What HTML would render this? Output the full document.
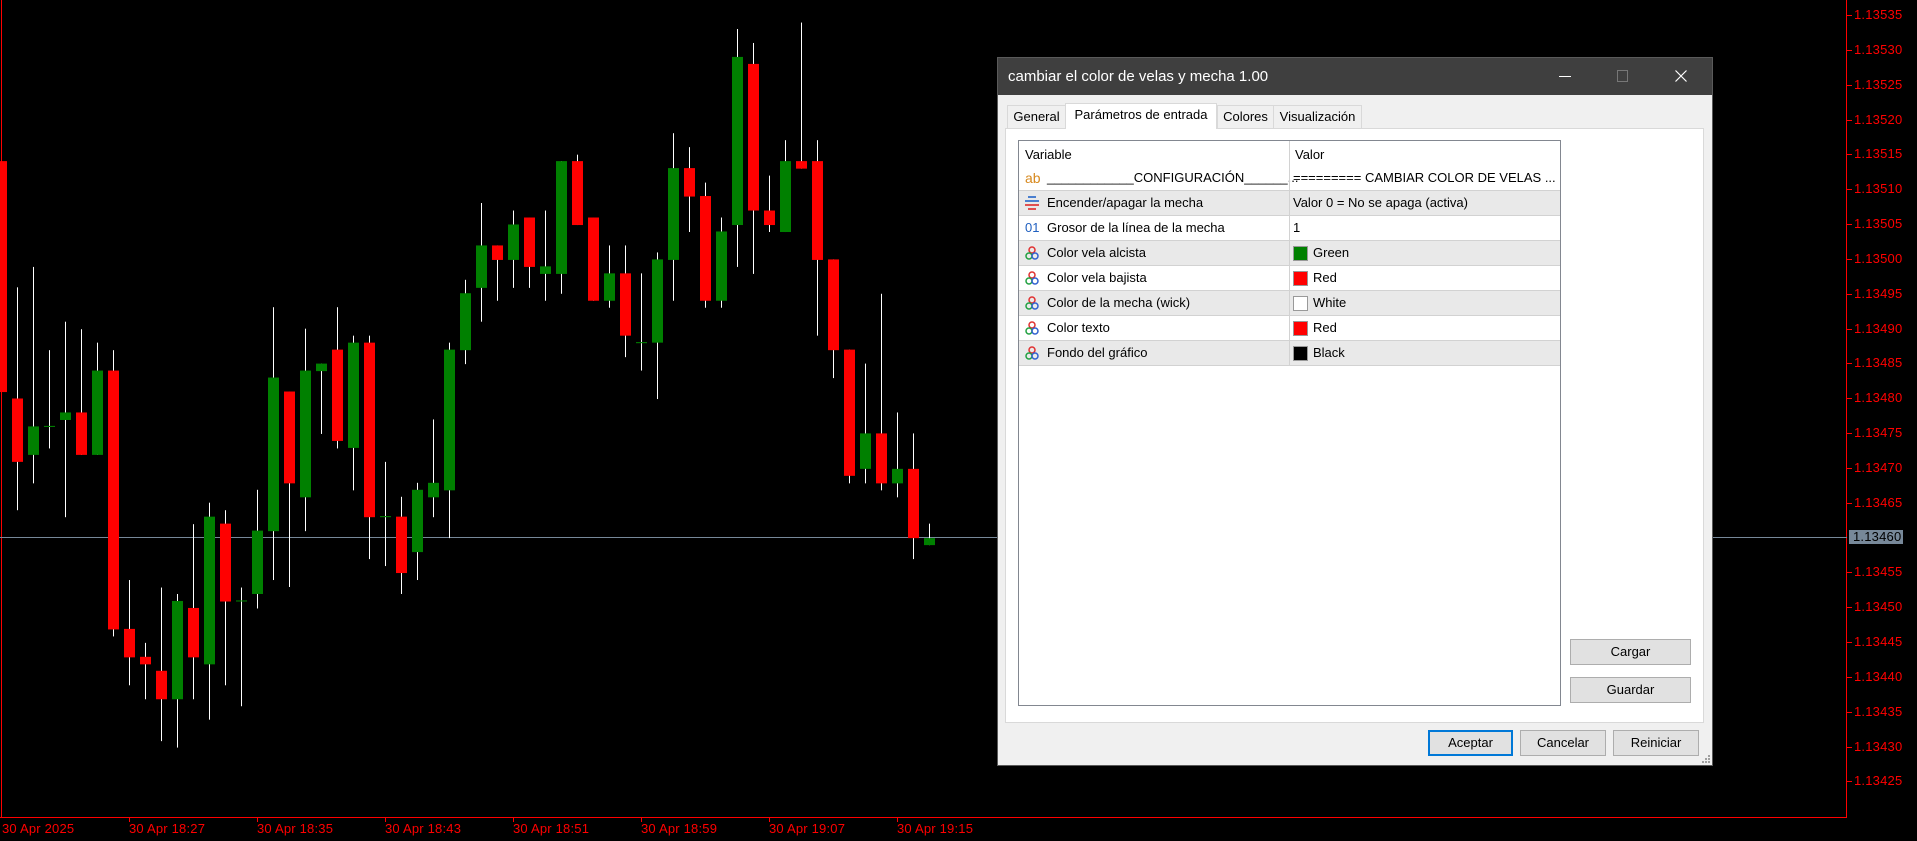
<!DOCTYPE html>
<html><head><meta charset="utf-8"><style>
*{margin:0;padding:0;box-sizing:border-box}
body{width:1917px;height:841px;background:#000;position:relative;overflow:hidden;font-family:"Liberation Sans",sans-serif}
.ax{position:absolute;color:#f00;font-size:13px;line-height:14px;white-space:nowrap;letter-spacing:0.2px}
.dlg{position:absolute;left:997px;top:57px;width:716px;height:709px;background:#f0f0f0;border:1px solid #5a5a5a}
.tb{position:absolute;left:0;top:0;width:714px;height:37px;background:#3f3f3f;color:#fff;font-size:15px;line-height:37px;padding-left:10px}
.tab{position:absolute;top:47px;height:23px;border:1px solid #d9d9d9;border-bottom:none;background:#f0f0f0;font-size:13px;line-height:22px;text-align:center;color:#000}
.tab.sel{top:45px;height:26px;background:#fff;z-index:2}
.panel{position:absolute;left:7px;top:70px;width:699px;height:595px;background:#fff;border:1px solid #d9d9d9}
.grid{position:absolute;left:12px;top:11px;width:543px;height:566px;border:1px solid #828790;background:#fff}
.row{position:absolute;left:0;width:541px;height:25px;font-size:13px;line-height:24px;color:#000}
.row.g{background:#e9e9e9}
.row.b{border-bottom:1px solid #d2d2d2}
.c1{position:absolute;left:28px;top:0}
.c2{position:absolute;left:274px;top:0}
.sep{position:absolute;left:270px;top:0;width:1px;background:#d2d2d2;z-index:3}
.ic{position:absolute;left:6px;top:0}
.sw{position:absolute;left:274px;top:5px;width:15px;height:15px;border:1px solid #999}
.sw+span{position:absolute;left:294px;top:0}
.btn{position:absolute;height:26px;background:#e1e1e1;border:1px solid #adadad;font-size:13px;line-height:24px;text-align:center;color:#000}
</style></head><body>

<svg width="1917" height="841" style="position:absolute;left:0;top:0">
<rect x="1" y="0" width="1" height="817" fill="#f00"/>
<rect x="1846" y="0" width="1" height="818" fill="#f00"/>
<rect x="0" y="817" width="1847" height="1" fill="#f00"/>
<rect x="0" y="537" width="1847" height="1" fill="#778899"/>
<g fill="#f00">
<rect x="129" y="817" width="1" height="5"/><rect x="257" y="817" width="1" height="5"/><rect x="385" y="817" width="1" height="5"/><rect x="513" y="817" width="1" height="5"/><rect x="641" y="817" width="1" height="5"/><rect x="769" y="817" width="1" height="5"/><rect x="897" y="817" width="1" height="5"/>
</g>
<g transform="scale(1,0.53706)">
<g fill="#fff">
<rect x="17" y="535" width="1" height="415"/><rect x="33" y="497" width="1" height="403"/><rect x="49" y="652" width="1" height="183"/><rect x="65" y="599" width="1" height="364"/><rect x="81" y="613" width="1" height="234"/><rect x="97" y="638" width="1" height="209"/><rect x="113" y="652" width="1" height="533"/><rect x="129" y="1080" width="1" height="196"/><rect x="145" y="1197" width="1" height="105"/><rect x="161" y="1094" width="1" height="286"/><rect x="177" y="1106" width="1" height="286"/><rect x="193" y="976" width="1" height="326"/><rect x="209" y="936" width="1" height="404"/><rect x="225" y="950" width="1" height="326"/><rect x="241" y="1094" width="1" height="221"/><rect x="257" y="912" width="1" height="221"/><rect x="273" y="572" width="1" height="508"/><rect x="289" y="729" width="1" height="364"/><rect x="305" y="612" width="1" height="377"/><rect x="321" y="677" width="1" height="131"/><rect x="337" y="572" width="1" height="263"/><rect x="353" y="625" width="1" height="288"/><rect x="369" y="625" width="1" height="416"/><rect x="385" y="860" width="1" height="194"/><rect x="401" y="925" width="1" height="181"/><rect x="417" y="899" width="1" height="181"/><rect x="433" y="781" width="1" height="182"/><rect x="449" y="638" width="1" height="364"/><rect x="465" y="521" width="1" height="157"/><rect x="481" y="378" width="1" height="221"/><rect x="497" y="457" width="1" height="103"/><rect x="513" y="392" width="1" height="144"/><rect x="529" y="405" width="1" height="131"/><rect x="545" y="392" width="1" height="168"/><rect x="561" y="300" width="1" height="247"/><rect x="577" y="288" width="1" height="131"/><rect x="593" y="405" width="1" height="155"/><rect x="609" y="457" width="1" height="116"/><rect x="625" y="457" width="1" height="208"/><rect x="641" y="509" width="1" height="181"/><rect x="657" y="470" width="1" height="273"/><rect x="673" y="248" width="1" height="312"/><rect x="689" y="274" width="1" height="158"/><rect x="705" y="340" width="1" height="233"/><rect x="721" y="405" width="1" height="168"/><rect x="737" y="54" width="1" height="443"/><rect x="753" y="80" width="1" height="430"/><rect x="769" y="327" width="1" height="105"/><rect x="785" y="261" width="1" height="171"/><rect x="801" y="42" width="1" height="272"/><rect x="817" y="261" width="1" height="364"/><rect x="833" y="483" width="1" height="221"/><rect x="849" y="651" width="1" height="249"/><rect x="865" y="677" width="1" height="223"/><rect x="881" y="547" width="1" height="366"/><rect x="897" y="768" width="1" height="158"/><rect x="913" y="807" width="1" height="234"/><rect x="929" y="975" width="1" height="40"/>
</g>
<g fill="#f00">
<rect x="-4" y="300" width="11" height="430"/><rect x="12" y="742" width="11" height="118"/><rect x="76" y="768" width="11" height="79"/><rect x="108" y="690" width="11" height="482"/><rect x="124" y="1171" width="11" height="53"/><rect x="140" y="1223" width="11" height="14"/><rect x="156" y="1249" width="11" height="53"/><rect x="188" y="1132" width="11" height="92"/><rect x="220" y="975" width="11" height="145"/><rect x="284" y="729" width="11" height="171"/><rect x="332" y="651" width="11" height="170"/><rect x="364" y="638" width="11" height="325"/><rect x="396" y="962" width="11" height="105"/><rect x="492" y="457" width="11" height="27"/><rect x="524" y="405" width="11" height="92"/><rect x="572" y="300" width="11" height="119"/><rect x="588" y="405" width="11" height="155"/><rect x="620" y="509" width="11" height="116"/><rect x="684" y="313" width="11" height="53"/><rect x="700" y="365" width="11" height="195"/><rect x="748" y="119" width="11" height="273"/><rect x="764" y="392" width="11" height="27"/><rect x="796" y="300" width="11" height="14"/><rect x="812" y="300" width="11" height="184"/><rect x="828" y="483" width="11" height="169"/><rect x="844" y="651" width="11" height="235"/><rect x="876" y="807" width="11" height="93"/><rect x="908" y="873" width="11" height="129"/>
</g>
<g fill="#008000">
<rect x="28" y="794" width="11" height="53"/><rect x="44" y="793" width="11" height="2"/><rect x="60" y="768" width="11" height="14"/><rect x="92" y="690" width="11" height="157"/><rect x="172" y="1119" width="11" height="183"/><rect x="204" y="962" width="11" height="275"/><rect x="236" y="1118" width="11" height="2"/><rect x="252" y="988" width="11" height="118"/><rect x="268" y="703" width="11" height="286"/><rect x="300" y="690" width="11" height="236"/><rect x="316" y="677" width="11" height="14"/><rect x="348" y="638" width="11" height="196"/><rect x="380" y="961" width="11" height="2"/><rect x="412" y="912" width="11" height="116"/><rect x="428" y="899" width="11" height="27"/><rect x="444" y="651" width="11" height="262"/><rect x="460" y="546" width="11" height="106"/><rect x="476" y="457" width="11" height="79"/><rect x="508" y="418" width="11" height="66"/><rect x="540" y="496" width="11" height="14"/><rect x="556" y="300" width="11" height="210"/><rect x="604" y="509" width="11" height="51"/><rect x="636" y="637" width="11" height="2"/><rect x="652" y="483" width="11" height="155"/><rect x="668" y="313" width="11" height="171"/><rect x="716" y="431" width="11" height="129"/><rect x="732" y="106" width="11" height="313"/><rect x="780" y="300" width="11" height="132"/><rect x="860" y="807" width="11" height="66"/><rect x="892" y="873" width="11" height="27"/><rect x="924" y="1002" width="11" height="13"/>
</g>
</g>
<g fill="#f00">
<rect x="1847" y="15" width="5" height="1"/><rect x="1847" y="50" width="5" height="1"/><rect x="1847" y="85" width="5" height="1"/><rect x="1847" y="120" width="5" height="1"/><rect x="1847" y="154" width="5" height="1"/><rect x="1847" y="189" width="5" height="1"/><rect x="1847" y="224" width="5" height="1"/><rect x="1847" y="259" width="5" height="1"/><rect x="1847" y="294" width="5" height="1"/><rect x="1847" y="329" width="5" height="1"/><rect x="1847" y="363" width="5" height="1"/><rect x="1847" y="398" width="5" height="1"/><rect x="1847" y="433" width="5" height="1"/><rect x="1847" y="468" width="5" height="1"/><rect x="1847" y="503" width="5" height="1"/><rect x="1847" y="572" width="5" height="1"/><rect x="1847" y="607" width="5" height="1"/><rect x="1847" y="642" width="5" height="1"/><rect x="1847" y="677" width="5" height="1"/><rect x="1847" y="712" width="5" height="1"/><rect x="1847" y="747" width="5" height="1"/><rect x="1847" y="781" width="5" height="1"/>
</g>
<rect x="1849" y="530" width="54" height="14" fill="#778899"/>
</svg>

<div class="ax" style="left:1854px;top:8px">1.13535</div>
<div class="ax" style="left:1854px;top:43px">1.13530</div>
<div class="ax" style="left:1854px;top:78px">1.13525</div>
<div class="ax" style="left:1854px;top:113px">1.13520</div>
<div class="ax" style="left:1854px;top:147px">1.13515</div>
<div class="ax" style="left:1854px;top:182px">1.13510</div>
<div class="ax" style="left:1854px;top:217px">1.13505</div>
<div class="ax" style="left:1854px;top:252px">1.13500</div>
<div class="ax" style="left:1854px;top:287px">1.13495</div>
<div class="ax" style="left:1854px;top:322px">1.13490</div>
<div class="ax" style="left:1854px;top:356px">1.13485</div>
<div class="ax" style="left:1854px;top:391px">1.13480</div>
<div class="ax" style="left:1854px;top:426px">1.13475</div>
<div class="ax" style="left:1854px;top:461px">1.13470</div>
<div class="ax" style="left:1854px;top:496px">1.13465</div>
<div class="ax" style="left:1853px;top:530px;color:#000">1.13460</div>
<div class="ax" style="left:1854px;top:565px">1.13455</div>
<div class="ax" style="left:1854px;top:600px">1.13450</div>
<div class="ax" style="left:1854px;top:635px">1.13445</div>
<div class="ax" style="left:1854px;top:670px">1.13440</div>
<div class="ax" style="left:1854px;top:705px">1.13435</div>
<div class="ax" style="left:1854px;top:740px">1.13430</div>
<div class="ax" style="left:1854px;top:774px">1.13425</div>

<div class="ax" style="left:2px;top:822px">30 Apr 2025</div>
<div class="ax" style="left:129px;top:822px">30 Apr 18:27</div>
<div class="ax" style="left:257px;top:822px">30 Apr 18:35</div>
<div class="ax" style="left:385px;top:822px">30 Apr 18:43</div>
<div class="ax" style="left:513px;top:822px">30 Apr 18:51</div>
<div class="ax" style="left:641px;top:822px">30 Apr 18:59</div>
<div class="ax" style="left:769px;top:822px">30 Apr 19:07</div>
<div class="ax" style="left:897px;top:822px">30 Apr 19:15</div>

<div class="dlg">
 <div class="tb">cambiar el color de velas y mecha 1.00
  <svg style="position:absolute;left:561px;top:13px" width="12" height="12"><rect x="0" y="5" width="12" height="1" fill="#fff"/></svg>
  <svg style="position:absolute;left:619px;top:12px" width="12" height="12"><rect x="0.5" y="0.5" width="10" height="11" fill="none" stroke="#777"/></svg>
  <svg style="position:absolute;left:677px;top:12px" width="12" height="12"><path d="M0.5 0.5L11.5 11.5M11.5 0.5L0.5 11.5" stroke="#fff" stroke-width="1.2"/></svg>
 </div>
 <div class="tab" style="left:9px;width:59px">General</div>
 <div class="tab sel" style="left:67px;width:152px">Parámetros de entrada</div>
 <div class="tab" style="left:219px;width:57px">Colores</div>
 <div class="tab" style="left:275px;width:89px">Visualización</div>
 <div class="panel">
  <div class="grid">
   <div class="row" style="top:0;height:26px;line-height:28px"><span class="c1" style="left:6px">Variable</span><span class="c2" style="left:276px">Valor</span></div>
   <div class="sep" style="top:0;height:224px"></div>
   <div class="row b" style="top:25px"><span class="ic" style="color:#d7891e;font-size:14px">ab</span><span class="c1">____________CONFIGURACIÓN______...</span><span class="c2">========= CAMBIAR COLOR DE VELAS ...</span></div>
   <div class="row g b" style="top:50px"><svg class="ic" style="top:4px" width="14" height="16"><rect x="3" y="1" width="8" height="2" fill="#4a7fcf"/><rect x="0" y="5" width="14" height="2" fill="#4a7fcf"/><rect x="0" y="9" width="14" height="2" fill="#e05050"/><rect x="3" y="13" width="8" height="2" fill="#e05050"/></svg><span class="c1">Encender/apagar la mecha</span><span class="c2">Valor 0 = No se apaga (activa)</span></div>
   <div class="row b" style="top:75px"><span class="ic" style="color:#2060c0;font-size:13px">01</span><span class="c1">Grosor de la línea de la mecha</span><span class="c2">1</span></div>
   <div class="row g b" style="top:100px"><svg class="ic" style="top:5px" width="14" height="14"><circle cx="7" cy="4" r="3" fill="none" stroke="#e03030" stroke-width="1.5"/><circle cx="4" cy="10" r="3" fill="none" stroke="#20a040" stroke-width="1.5"/><circle cx="10" cy="10" r="3" fill="none" stroke="#3060d0" stroke-width="1.5"/></svg><span class="c1">Color vela alcista</span><span class="sw" style="background:#008000"></span><span>Green</span></div>
   <div class="row b" style="top:125px"><svg class="ic" style="top:5px" width="14" height="14"><circle cx="7" cy="4" r="3" fill="none" stroke="#e03030" stroke-width="1.5"/><circle cx="4" cy="10" r="3" fill="none" stroke="#20a040" stroke-width="1.5"/><circle cx="10" cy="10" r="3" fill="none" stroke="#3060d0" stroke-width="1.5"/></svg><span class="c1">Color vela bajista</span><span class="sw" style="background:#f00"></span><span>Red</span></div>
   <div class="row g b" style="top:150px"><svg class="ic" style="top:5px" width="14" height="14"><circle cx="7" cy="4" r="3" fill="none" stroke="#e03030" stroke-width="1.5"/><circle cx="4" cy="10" r="3" fill="none" stroke="#20a040" stroke-width="1.5"/><circle cx="10" cy="10" r="3" fill="none" stroke="#3060d0" stroke-width="1.5"/></svg><span class="c1">Color de la mecha (wick)</span><span class="sw" style="background:#fff"></span><span>White</span></div>
   <div class="row b" style="top:175px"><svg class="ic" style="top:5px" width="14" height="14"><circle cx="7" cy="4" r="3" fill="none" stroke="#e03030" stroke-width="1.5"/><circle cx="4" cy="10" r="3" fill="none" stroke="#20a040" stroke-width="1.5"/><circle cx="10" cy="10" r="3" fill="none" stroke="#3060d0" stroke-width="1.5"/></svg><span class="c1">Color texto</span><span class="sw" style="background:#f00"></span><span>Red</span></div>
   <div class="row g b" style="top:200px"><svg class="ic" style="top:5px" width="14" height="14"><circle cx="7" cy="4" r="3" fill="none" stroke="#e03030" stroke-width="1.5"/><circle cx="4" cy="10" r="3" fill="none" stroke="#20a040" stroke-width="1.5"/><circle cx="10" cy="10" r="3" fill="none" stroke="#3060d0" stroke-width="1.5"/></svg><span class="c1">Fondo del gráfico</span><span class="sw" style="background:#000"></span><span>Black</span></div>
  </div>
  <div class="btn" style="left:564px;top:510px;width:121px">Cargar</div>
  <div class="btn" style="left:564px;top:548px;width:121px">Guardar</div>
 </div>
 <div class="btn" style="left:430px;top:672px;width:85px;border:2px solid #0078d7;line-height:22px">Aceptar</div>
 <div class="btn" style="left:522px;top:672px;width:86px">Cancelar</div>
 <div class="btn" style="left:615px;top:672px;width:86px">Reiniciar</div>
 <svg style="position:absolute;right:1px;bottom:1px" width="10" height="10" fill="#a0a0a0"><rect x="7" y="1" width="2" height="2"/><rect x="4" y="4" width="2" height="2"/><rect x="7" y="4" width="2" height="2"/><rect x="1" y="7" width="2" height="2"/><rect x="4" y="7" width="2" height="2"/><rect x="7" y="7" width="2" height="2"/></svg>
</div>
</body></html>
